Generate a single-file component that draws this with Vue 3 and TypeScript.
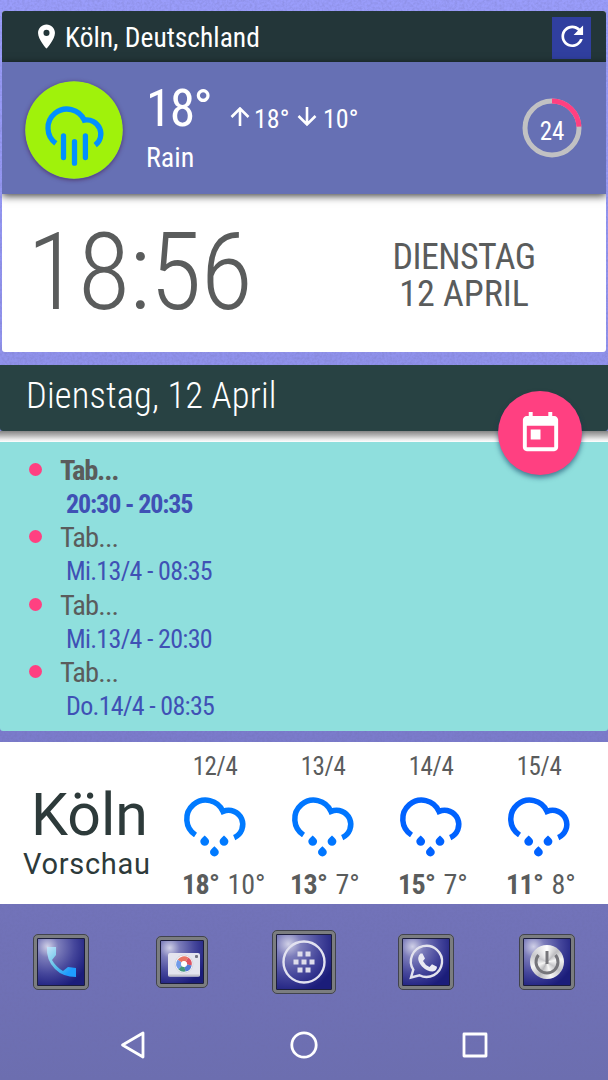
<script lang="ts" setup>
interface Appointment {
        title: string;
        time: string;
        active?: boolean;
}

interface ForecastDay {
        date: string;
        high: string;
        low: string;
        color: string;
}

const appointments: Appointment[] = [
        { title: "Tab...", time: "20:30 - 20:35", active: true },
        { title: "Tab...", time: "Mi.13/4 - 08:35" },
        { title: "Tab...", time: "Mi.13/4 - 20:30" },
        { title: "Tab...", time: "Do.14/4 - 08:35" }
];

const forecast: ForecastDay[] = [
        { date: "12/4", high: "18°", low: "10°", color: "#007aff" },
        { date: "13/4", high: "13°", low: "7°", color: "#0076ff" },
        { date: "14/4", high: "15°", low: "7°", color: "#0062ff" },
        { date: "15/4", high: "11°", low: "8°", color: "#0062ff" }
];

const battery = 24;
const ringLength = 2 * Math.PI * 27;
const ringDash = `${(ringLength * battery) / 100} ${ringLength}`;
</script>

<template>
        <div class="screen">
                <svg class="grain" width="608" height="1080" aria-hidden="true">
                        <filter id="grain" x="0" y="0" width="100%" height="100%">
                                <feTurbulence type="fractalNoise" baseFrequency="0.4" numOctaves="2" seed="4" />
                                <feColorMatrix values="0 0 0 0 0.15  0 0 0 0 0.15  0 0 0 0 0.4  0.5 0 0 0 -0.17" />
                        </filter>
                        <rect width="608" height="1080" filter="url(#grain)" />
                </svg>

                <section class="weather">
                        <header class="location">
                                <svg class="location__pin" viewBox="0 0 24 24">
                                        <path d="M12 2C8.13 2 5 5.13 5 9c0 5.25 7 13 7 13s7-7.75 7-13c0-3.87-3.13-7-7-7zm0 9.5a2.5 2.5 0 1 1 0-5 2.5 2.5 0 0 1 0 5z" />
                                </svg>
                                <span class="location__name">Köln, Deutschland</span>
                                <button class="refresh" type="button" aria-label="Refresh">
                                        <svg viewBox="0 0 24 24">
                                                <path d="M17.65 6.35C16.2 4.9 14.21 4 12 4c-4.42 0-7.99 3.58-7.99 8s3.57 8 7.99 8c3.73 0 6.84-2.55 7.73-6h-2.08c-.82 2.33-3.04 4-5.65 4-3.31 0-6-2.69-6-6s2.69-6 6-6c1.66 0 3.14.69 4.22 1.78L13 11h7V4l-2.35 2.35z" />
                                        </svg>
                                </button>
                        </header>

                        <div class="current">
                                <svg class="current__icon" viewBox="0 0 98 98">
                                        <circle cx="49" cy="49" r="48.8" fill="#a0f20b" />
                                        <g fill="none" stroke="#0090ff" stroke-width="5.3">
                                                <path d="M30.8 62.4A19 19 0 1 1 59.3 39.2A14 14 0 0 1 70.2 64.2" />
                                                <path stroke-linecap="round" d="M40.3 55v21.6M51.3 60.6v21.6M62.2 55v21.6" transform="translate(-1.8 0)" />
                                        </g>
                                </svg>
                                <div class="current__info">
                                        <div class="current__temps">
                                                <span class="current__now">18°</span>
                                                <svg class="arrow" viewBox="0 0 20 20">
                                                        <path d="M10 19V1.5M1.5 10L10 1.5L18.5 10" />
                                                </svg>
                                                <span class="current__limit">18°</span>
                                                <svg class="arrow" viewBox="0 0 20 20">
                                                        <path d="M10 0V17.500M1.500 9L10 17.500L18.500 9" />
                                                </svg>
                                                <span class="current__limit current__limit--low">10°</span>
                                        </div>
                                        <div class="current__label">Rain</div>
                                </div>
                                <div class="battery">
                                        <svg viewBox="0 0 60 60">
                                                <circle cx="30" cy="30" r="27" stroke="#c1c1c3" />
                                                <circle cx="30" cy="30" r="27" stroke="#ff4081" :stroke-dasharray="ringDash" transform="rotate(-90 30 30)" />
                                        </svg>
                                        <span class="battery__value">{{ battery }}</span>
                                </div>
                        </div>

                        <div class="clock">
                                <div class="clock__time">18:56</div>
                                <div class="clock__date">
                                        <div class="clock__weekday">DIENSTAG</div>
                                        <div>12 APRIL</div>
                                </div>
                        </div>
                </section>

                <section class="calendar">
                        <header class="calendar__header">
                                <span class="calendar__title">Dienstag, 12 April</span>
                        </header>
                        <div class="calendar__edge" />
                        <button class="fab" type="button" aria-label="Open calendar">
                                <svg viewBox="0 0 24 24">
                                        <path d="M19 3h-1V1h-2v2H8V1H6v2H5c-1.11 0-1.99.9-1.99 2L3 19c0 1.1.89 2 2 2h14c1.1 0 2-.9 2-2V5c0-1.1-.9-2-2-2zm0 16H5V8h14v11zM7 10h5v5H7z" />
                                </svg>
                        </button>
                        <ul class="agenda">
                                <li
                                        v-for="item in appointments"
                                        :key="item.time"
                                        class="agenda__item"
                                        :class="{ 'agenda__item--active': item.active }"
                                >
                                        <span class="agenda__dot" />
                                        <div>
                                                <div class="agenda__title">{{ item.title }}</div>
                                                <div class="agenda__time">{{ item.time }}</div>
                                        </div>
                                </li>
                        </ul>
                </section>

                <section class="forecast">
                        <div class="forecast__place">
                                <div class="forecast__city">Köln</div>
                                <div class="forecast__caption">Vorschau</div>
                        </div>
                        <div v-for="day in forecast" :key="day.date" class="day">
                                <div class="day__date">{{ day.date }}</div>
                                <svg class="day__icon" viewBox="0 0 66 62" :style="{ color: day.color }">
                                        <path
                                                d="M13.5 40A18.9 18.9 0 1 1 41 16.5A14.2 14.2 0 0 1 52.2 42.6"
                                                fill="none"
                                                stroke="currentColor"
                                                stroke-width="5.5"
                                        />
                                        <g fill="currentColor">
                                                <path d="M22.7 40.5c2.8 2.5 4.4 4 4.4 5.8a4.4 4.4 0 0 1-8.8 0c0-1.8 1.6-3.3 4.4-5.8z" />
                                                <path d="M42 40.5c2.8 2.5 4.4 4 4.4 5.8a4.4 4.4 0 0 1-8.8 0c0-1.8 1.6-3.3 4.4-5.8z" />
                                                <path d="M32.4 51.2c2.8 2.5 4.4 4 4.4 5.8a4.4 4.4 0 0 1-8.8 0c0-1.8 1.6-3.3 4.4-5.8z" />
                                        </g>
                                </svg>
                                <div class="day__temps">
                                        <span class="day__high">{{ day.high }}</span>
                                        <span class="day__low">{{ day.low }}</span>
                                </div>
                        </div>
                </section>

                <nav class="dock">
                        <div class="tile">
                                <svg viewBox="-24 -24 48 48">
                                        <defs>
                                                <linearGradient id="phone" x1="0" y1="0" x2="1" y2="1">
                                                        <stop offset="0" stop-color="#c5e4fb" />
                                                        <stop offset=".45" stop-color="#62c4e8" />
                                                        <stop offset=".8" stop-color="#1e9cff" />
                                                </linearGradient>
                                        </defs>
                                        <path fill="url(#phone)" d="M-14-15L-5-15L-5-7L-9-2Q-5 5 2 9L7 5L15 6L15 15Q2 15-6 7Q-15-2-14-15z" />
                                </svg>
                        </div>
                        <div class="tile tile--small">
                                <svg viewBox="-24 -24 48 48">
                                        <rect x="-16" y="-11" width="32" height="23.5" rx="2" fill="#e4e4ee" />
                                        <rect x="-16" y="10.5" width="32" height="2" rx="1" fill="#c2c2cc" />
                                        <circle r="9" fill="#f8f8fb" stroke="#cfcfd8" stroke-width=".8" />
                                        <g fill="none" stroke-width="4.6">
                                                <path d="M-4.5-3A5.4 5.4 0 0 1 3-4.5" stroke="#e87563" />
                                                <path d="M3-4.5A5.4 5.4 0 0 1 5.4 1" stroke="#dc5363" />
                                                <path d="M5.4 1A5.4 5.4 0 0 1 1 5.3" stroke="#527bd6" />
                                                <path d="M1 5.3A5.4 5.4 0 0 1-4 3.6" stroke="#43987d" />
                                                <path d="M-4 3.6A5.4 5.4 0 0 1-4.5-3" stroke="#719be8" />
                                        </g>
                                        <circle r="2.7" fill="#fff" />
                                        <rect x="11" y="-9" width="3" height="3" rx="1" fill="#737382" />
                                </svg>
                        </div>
                        <div class="tile tile--large">
                                <svg viewBox="-24 -24 48 48">
                                        <circle r="20.5" fill="none" stroke="#e2e2f0" stroke-width="2.4" />
                                        <g fill="#deddeb">
                                                <rect x="-6.5" y="-10.5" width="5" height="5" />
                                                <rect x="1.5" y="-10.5" width="5" height="5" />
                                                <rect x="-10.5" y="-2.5" width="5" height="5" />
                                                <rect x="-2.5" y="-2.5" width="5" height="5" />
                                                <rect x="5.5" y="-2.5" width="5" height="5" />
                                                <rect x="-6.5" y="5.5" width="5" height="5" />
                                                <rect x="1.5" y="5.5" width="5" height="5" />
                                        </g>
                                </svg>
                        </div>
                        <div class="tile">
                                <svg viewBox="-24 -24 48 48">
                                        <path
                                                d="M-15 15.5L-12.7 7.7A15.6 15.6 0 1 1-6.5 13.3z"
                                                fill="none"
                                                stroke="#e3e3ee"
                                                stroke-width="2.4"
                                        />
                                        <path
                                                fill="#ebebf4"
                                                d="M-5.5-8.5L-3.5-8.5L-1-3.5L-3-1Q-1 3 3.5 5L6 2.2L11 4.8Q11 9 6.5 9.5Q1 9.5-4 4.5Q-8 0-7.8-4Q-7.5-7-5.5-8.5z"
                                        />
                                </svg>
                        </div>
                        <div class="tile">
                                <div class="power">
                                        <svg viewBox="-17 -17 34 34">
                                                <path d="M-8.5-7A11 11 0 1 0 8.5-7M0-11V2" fill="none" stroke="#75757a" stroke-width="3" />
                                        </svg>
                                </div>
                        </div>
                </nav>

                <nav class="navbar">
                        <svg viewBox="-15 -15 30 30">
                                <path d="M-10.5 0L10-12V12z" />
                        </svg>
                        <svg viewBox="-15 -15 30 30">
                                <circle r="12.2" />
                        </svg>
                        <svg viewBox="-15 -15 30 30">
                                <rect x="-11" y="-11" width="22" height="22" />
                        </svg>
                </nav>
        </div>
</template>

<style>
body {
        margin: 0;
}
</style>

<style scoped>
.screen {
        position: relative;
        display: flex;
        flex-direction: column;
        box-sizing: border-box;
        width: 608px;
        height: 1080px;
        padding-top: 11px;
        overflow: hidden;
        font-family: "Roboto Condensed", Roboto, sans-serif;
        font-stretch: 75%;
        background: linear-gradient(#9a9dfb 0, #9092ec 358px, #7b7bcc 736px, #7273ba 905px, #6c6eb0 1080px);
}

.grain {
        position: absolute;
        inset: 0;
}

.weather,
.calendar,
.forecast,
.dock,
.navbar {
        position: relative;
        flex: none;
}

svg {
        display: block;
        flex: none;
}

button {
        border: none;
        padding: 0;
}

.weather {
        height: 341px;
        margin: 0 2px;
        overflow: hidden;
        border-radius: 3px;
        background: #fff;
}

.location {
        display: flex;
        align-items: center;
        height: 51px;
        background: #233639;
}

.location__pin {
        width: 29px;
        height: 29px;
        margin-left: 30px;
        fill: #fff;
}

.location__name {
        flex: 1;
        margin-left: 4px;
        padding-top: 2px;
        font-size: 27.5px;
        color: #fff;
}

.refresh {
        display: grid;
        place-items: center;
        width: 39px;
        height: 42px;
        margin: 3px 15px 0 0;
        background: #303f9f;
}

.refresh svg {
        width: 32.5px;
        height: 32.5px;
        margin: 0 0 4px 1px;
        fill: #fff;
}

.current {
        position: relative;
        display: flex;
        height: 132px;
        color: #fff;
        background: #6670b4;
        box-shadow: 0 2px 8px rgba(0, 0, 0, 0.75);
}

.current__icon {
        width: 98px;
        height: 98px;
        margin: 19px 0 0 23px;
        border-radius: 50%;
        box-shadow: 0 1px 4px rgba(70, 30, 80, 0.7);
}

.current__info {
        flex: 1;
        margin-left: 23px;
}

.current__temps {
        display: flex;
        height: 60px;
        margin-top: 16px;
}

.current__now {
        width: 84px;
        font-size: 51.5px;
        line-height: 61px;
        letter-spacing: -1.7px;
}

.arrow {
        width: 20px;
        height: 20px;
        margin-top: 29px;
        fill: none;
        stroke: #fff;
        stroke-width: 2.6;
}

.current__limit {
        width: 43px;
        margin-left: 4px;
        padding-top: 25px;
        font-size: 26px;
        line-height: 32px;
}

.current__limit--low {
        margin-left: 6px;
}

.current__label {
        margin-top: 3px;
        font-size: 28px;
        line-height: 33px;
}

.battery {
        display: grid;
        width: 60px;
        height: 60px;
        margin: 36px 24px 0 0;
}

.battery > * {
        grid-area: 1 / 1;
}

.battery circle {
        fill: none;
        stroke-width: 5;
}

.battery__value {
        margin-top: 3px;
        font-size: 25px;
        line-height: 61px;
        text-align: center;
}

.clock {
        display: flex;
        color: #5a5c5c;
}

.clock__time {
        width: 354px;
        padding-left: 25px;
        font-size: 107px;
        font-weight: 300;
        line-height: 158px;
        letter-spacing: -1px;
}

.clock__date {
        width: 166px;
        padding-top: 45px;
        font-size: 36px;
        line-height: 37px;
        text-align: center;
}

.clock__weekday {
        letter-spacing: -0.6px;
}

.calendar {
        height: 366px;
        margin-top: 13px;
}

.calendar__header {
        height: 66px;
        padding-left: 26px;
        border-radius: 0 0 3px 3px;
        font-size: 36.5px;
        font-weight: 300;
        line-height: 62px;
        letter-spacing: 0.15px;
        color: #fff;
        background: #284243;
}

.calendar__edge {
        height: 11px;
        background: linear-gradient(#858585, #b0b0b0 35%, #e8e8e8 75%, #fff);
}

/* floats over the seam between the header and the list */
.fab {
        position: absolute;
        top: 26px;
        right: 26px;
        display: grid;
        place-items: center;
        width: 84px;
        height: 84px;
        border-radius: 50%;
        background: #ff4081;
        box-shadow: 0 3px 5px rgba(10, 50, 90, 0.55);
}

.fab svg {
        width: 47px;
        height: 47px;
        fill: #fff;
}

.agenda {
        height: 289px;
        box-sizing: border-box;
        margin: 0;
        padding: 11px 0 0 29px;
        list-style: none;
        border-radius: 0 0 3px 3px;
        background: #8fdfdd;
}

.agenda__item {
        display: flex;
        height: 67.3px;
}

.agenda__dot {
        width: 13px;
        height: 13px;
        margin: 10px 18px 0 0;
        border-radius: 50%;
        background: #ff4081;
}

.agenda__title {
        padding-top: 1px;
        font-size: 28.5px;
        line-height: 34px;
        letter-spacing: -0.9px;
        color: #5a5c5c;
}

.agenda__time {
        padding-left: 6px;
        font-size: 26px;
        line-height: 33px;
        letter-spacing: -0.7px;
        color: #3f51b5;
}

.agenda__item--active {
        font-weight: 700;
}

.agenda__item--active .agenda__title {
        letter-spacing: -1.2px;
}

.agenda__item--active .agenda__time {
        letter-spacing: -1.1px;
}

.forecast {
        display: flex;
        height: 162px;
        margin-top: 11px;
        background: #fff;
        color: #5a5c5c;
}

.forecast__place {
        width: 161px;
        font-family: Roboto, sans-serif;
        font-stretch: 100%;
        color: #2d3a3a;
}

.forecast__city {
        padding: 38px 0 0 31px;
        font-size: 59px;
        line-height: 70px;
}

.forecast__caption {
        padding-left: 23px;
        font-size: 29px;
        line-height: 29px;
        letter-spacing: 0.7px;
}

.day {
        width: 108px;
}

.day__date {
        margin-top: 9px;
        font-size: 25px;
        line-height: 31px;
        letter-spacing: -0.4px;
        text-align: center;
}

.day__icon {
        width: 66px;
        height: 62px;
        margin: 13px 0 0 21px;
}

.day__temps {
        display: flex;
        gap: 8px;
        margin-top: 11px;
        padding-left: 21px;
        font-size: 28px;
        line-height: 33px;
}

.day__high {
        font-weight: 700;
        letter-spacing: -0.6px;
}

.dock {
        display: grid;
        grid-template-columns: repeat(5, 1fr);
        place-items: center;
        height: 115px;
}

.tile {
        display: grid;
        place-items: center;
        box-sizing: border-box;
        width: 56px;
        height: 56px;
        border: 4px solid #7b7d80;
        border-radius: 5px;
        outline: 1px solid #41434d;
        outline-offset: -1px;
        background:
                radial-gradient(circle at 22% 18%, rgba(240, 240, 250, 0.85), rgba(190, 190, 230, 0.6) 20%, rgba(120, 120, 195, 0.45) 50%, rgba(80, 80, 170, 0.3) 68%, transparent 80%),
                #1b1d7a;
        background-clip: padding-box;
        box-shadow: inset 0 0 0 1px #1c1d3c;
}

.tile svg {
        width: 48px;
        height: 48px;
}

.tile--small {
        width: 52px;
        height: 52px;
}

.tile--large {
        width: 64px;
        height: 64px;
}

.power {
        width: 34px;
        height: 34px;
        border-radius: 50%;
        background: conic-gradient(#fff, #bdbdc0 12%, #f5f5f5 22%, #c5c5c8 34%, #f8f8f8 46%, #b8b8bc 58%, #f5f5f5 70%, #c8c8cc 82%, #fff);
}

.power svg {
        width: 34px;
        height: 34px;
}

.navbar {
        display: flex;
        justify-content: space-between;
        padding: 10.5px 118px 0;
}

.navbar svg {
        width: 30px;
        height: 30px;
        fill: none;
        stroke: #fff;
        stroke-width: 2.8;
        stroke-linejoin: round;
}
</style>
